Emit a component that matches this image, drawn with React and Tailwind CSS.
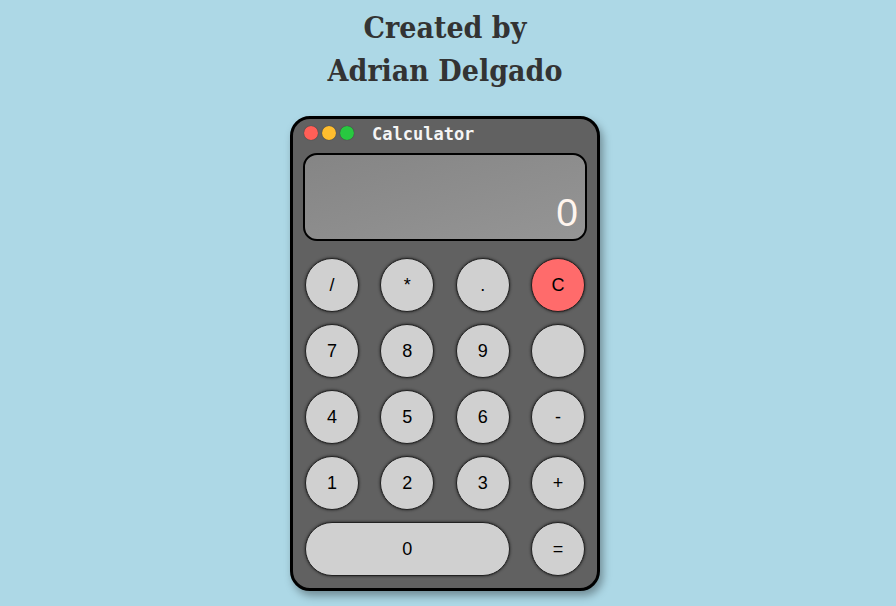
const KEYS = [
  { label: '/' }, { label: '*' }, { label: '.' }, { label: 'C', red: true },
  { label: '7' }, { label: '8' }, { label: '9' }, { label: '' },
  { label: '4' }, { label: '5' }, { label: '6' }, { label: '-' },
  { label: '1' }, { label: '2' }, { label: '3' }, { label: '+' },
]

function Key({ label, red, wide }) {
  return (
    <button
      className={`h-[54px] ${wide ? 'col-span-3 w-full' : 'w-[54px]'} rounded-full border border-[#222] ${red ? 'bg-[#ff6b6b]' : 'bg-[#d0d0d0]'} shadow-[0_0_3px_rgba(0,0,0,0.7)] font-['Liberation_Sans',Arial,sans-serif] text-[18px] text-black flex items-center justify-center`}
    >
      {label}
    </button>
  )
}

export default function App() {
  return (
    <div className="min-h-screen bg-[#add8e6] flex flex-col items-center pr-[6px]">
      <h1 className="pt-[6px] text-center font-['DejaVu_Serif',serif] font-bold text-[30px] leading-[43px] text-[#333] [font-stretch:condensed]">
        Created by<br />Adrian Delgado
      </h1>

      {/* calculator body */}
      <div className="mt-[24px] w-[310px] rounded-[20px] border-[3px] border-black bg-[#616161] px-[10px] pb-[12px] shadow-[3px_5px_8px_rgba(0,0,0,0.35)]">
        <div className="h-[27px] pt-[1px] flex items-center pl-[1px]">
          <div className="flex gap-[4px]">
            <span className="w-[14px] h-[14px] rounded-full bg-[#ff5f57] shadow-[0_0_1px_rgba(0,0,0,0.6)]" />
            <span className="w-[14px] h-[14px] rounded-full bg-[#ffbd2e] shadow-[0_0_1px_rgba(0,0,0,0.6)]" />
            <span className="w-[14px] h-[14px] rounded-full bg-[#28c840] shadow-[0_0_1px_rgba(0,0,0,0.6)]" />
          </div>
          <span className="ml-[18px] mt-[3px] font-['DejaVu_Sans_Mono',monospace] font-bold text-[17px] text-[#f5f5f5] leading-none">
            Calculator
          </span>
        </div>

        <div className="mt-[7px] h-[88px] rounded-[14px] border-2 border-black bg-gradient-to-br from-[#858585] to-[#959595] flex items-end justify-end pr-[7px] pb-[3px]">
          <span className="font-['Liberation_Sans',Arial,sans-serif] text-[39px] leading-[46px] text-[#fff5ee]">0</span>
        </div>

        <div className="mt-[17px] mx-[2px] grid gap-y-[12px] [grid-template-columns:repeat(4,54px)] justify-between">
          {KEYS.map((k, i) => (
            <Key key={i} label={k.label} red={k.red} />
          ))}
          <Key label="0" wide />
          <Key label="=" />
        </div>
      </div>
    </div>
  )
}
